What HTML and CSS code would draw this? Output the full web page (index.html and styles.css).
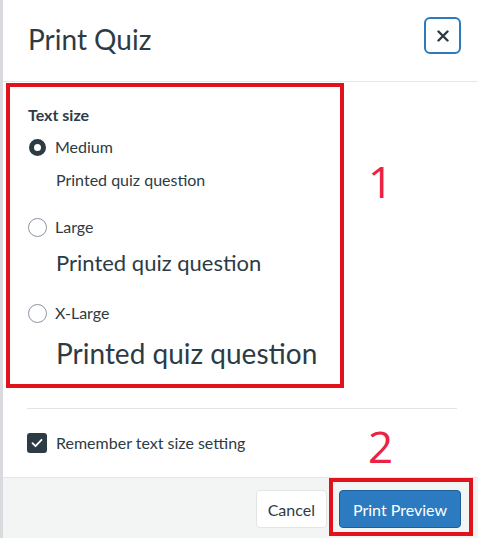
FILE: index.html
```html
<!DOCTYPE html>
<html>
<head>
<meta charset="utf-8">
<link rel="stylesheet" href="styles.css">
</head>
<body>
<div class="page">
  <div class="strip"></div>
  <div class="modal">
    <div class="header">
      <h1 class="title">Print Quiz</h1>
      <button class="close" aria-label="Close">
        <svg width="12" height="12" viewBox="0 0 12 12"><path d="M1.5 1.5 L10.5 10.5 M10.5 1.5 L1.5 10.5" stroke="#2d3b45" stroke-width="2.4" stroke-linecap="round"/></svg>
      </button>
    </div>
    <div class="body">
      <div class="legend">Text size</div>
      <div class="option">
        <div class="row"><span class="radio checked"></span><span class="label">Medium</span></div>
        <div class="preview p-medium">Printed quiz question</div>
      </div>
      <div class="option">
        <div class="row"><span class="radio"></span><span class="label">Large</span></div>
        <div class="preview p-large">Printed quiz question</div>
      </div>
      <div class="option">
        <div class="row"><span class="radio"></span><span class="label">X-Large</span></div>
        <div class="preview p-xlarge">Printed quiz question</div>
      </div>
      <div class="divider"></div>
      <div class="check-row">
        <span class="checkbox">
          <svg width="12" height="10" viewBox="0 0 12 10"><path d="M1.5 5.2 L4.5 8.2 L10.5 1.8" fill="none" stroke="#fff" stroke-width="1.8" stroke-linecap="round" stroke-linejoin="round"/></svg>
        </span>
        <span class="label">Remember text size setting</span>
      </div>
    </div>
    <div class="footer">
      <button class="btn btn-secondary">Cancel</button>
      <button class="btn btn-primary">Print Preview</button>
    </div>
  </div>
  <div class="annot box1"></div>
  <div class="annot box2"></div>
  <div class="annot num num1">1</div>
  <div class="annot num num2">2</div>
</div>
</body>
</html>
```

FILE: styles.css
```css
* { box-sizing: border-box; }
html, body { margin: 0; padding: 0; background: #fff; }
body {
  font-family: Lato, "Noto Sans", sans-serif;
  color: #2d3b45;
}
.page {
  position: relative;
  display: flex;
  width: 478px;
  height: 538px;
  overflow: hidden;
}
.strip {
  width: 3px;
  flex: none;
  background: #dadade;
}
.modal {
  flex: 1;
  display: flex;
  flex-direction: column;
}
.header {
  height: 82px;
  display: flex;
  justify-content: space-between;
  align-items: flex-start;
  padding: 17px 17px 0 25px;
  border-bottom: 1px solid #e6e6e6;
}
.title {
  margin: 4px 0 0 0;
  font-size: 28px;
  line-height: 36px;
  font-weight: 400;
}
.close {
  width: 37px;
  height: 37px;
  border: 2px solid #2b7abc;
  border-radius: 6px;
  background: #fff;
  display: flex;
  align-items: center;
  justify-content: center;
  padding: 0;
}
.body {
  flex: 1;
  padding: 21px 21px 0 24px;
}
.legend {
  font-size: 16px;
  line-height: 24px;
  font-weight: 700;
  padding-left: 1px;
  margin-bottom: 8px;
}
.option + .option { margin-top: 23px; }
.row {
  display: flex;
  align-items: center;
  height: 24px;
}
.radio {
  width: 19px;
  height: 19px;
  border-radius: 50%;
  border: 1px solid #8d959f;
  background: #fff;
  margin-left: 1px;
  margin-right: 8px;
  flex: none;
}
.radio.checked {
  border: 5px solid #2d3b45;
  width: 17px;
  height: 17px;
  margin-left: 2px;
  margin-right: 9px;
}
.label {
  font-size: 16px;
  line-height: 24px;
}
.preview {
  margin-top: 9px;
  padding-left: 29px;
}
.p-medium { font-size: 16px; line-height: 24px; }
.p-large { font-size: 22px; line-height: 30px; }
.p-xlarge { font-size: 28px; line-height: 36px; margin-top: 10px; }
.divider {
  height: 1px;
  background: #e3e3e3;
  margin: 37px 0 0 0;
}
.check-row {
  display: flex;
  align-items: center;
  margin-top: 22px;
  height: 24px;
}
.checkbox {
  width: 20px;
  height: 20px;
  border-radius: 3px;
  background: #2d3b45;
  display: flex;
  align-items: center;
  justify-content: center;
  margin-left: 0;
  margin-right: 9px;
}
.footer {
  height: 61px;
  flex: none;
  border-top: 1px solid #e3e5e6;
  background: #f3f4f4;
  display: flex;
  justify-content: flex-end;
  align-items: flex-start;
  gap: 12px;
  padding: 12px 17px 0 0;
}
.btn {
  height: 38px;
  border-radius: 4px;
  font-family: Lato, "Noto Sans", sans-serif;
  font-size: 16px;
  padding: 0 11px;
  border: 1px solid;
}
.btn-secondary {
  background: #fff;
  border-color: #e2e4e6;
  color: #2d3b45;
}
.btn-primary {
  background: #2c7bc0;
  border-color: #1d5f98;
  color: #fff;
  padding: 0 13px;
}
.annot { position: absolute; }
.box1 {
  left: 6px;
  top: 83px;
  width: 338px;
  height: 305px;
  border: 4px solid #e0121b;
}
.box2 {
  left: 329px;
  top: 478px;
  width: 144px;
  height: 58px;
  border: 4px solid #e0121b;
}
.num {
  font-family: "Open Sans", "Noto Sans", sans-serif;
  font-weight: 400;
  font-size: 44px;
  line-height: 44px;
  color: #ec2244;
}
.num1 { left: 368px; top: 159px; }
.num2 { left: 368px; top: 424px; }
```
